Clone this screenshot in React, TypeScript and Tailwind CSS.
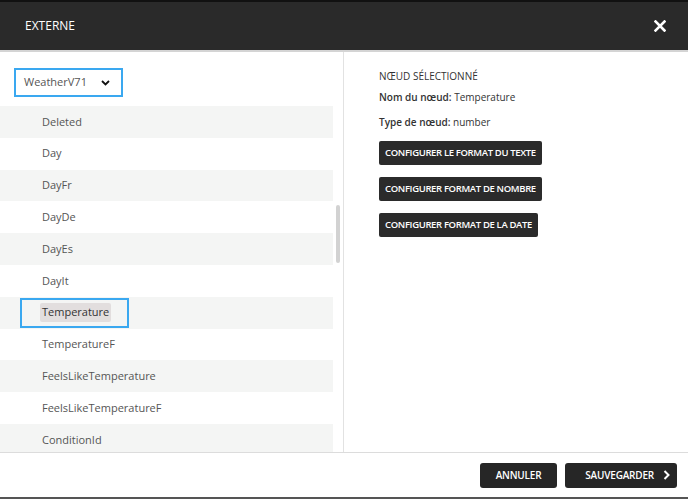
const rows = [
	"Deleted",
	"Day",
	"DayFr",
	"DayDe",
	"DayEs",
	"DayIt",
	"Temperature",
	"TemperatureF",
	"FeelsLikeTemperature",
	"FeelsLikeTemperatureF",
	"ConditionId",
];

const buttons = [
	"CONFIGURER LE FORMAT DU TEXTE",
	"CONFIGURER FORMAT DE NOMBRE",
	"CONFIGURER FORMAT DE LA DATE",
];

const App = () => {
	return (
		<div className="flex flex-col h-[499px] w-[688px] overflow-hidden bg-white font-['Open_Sans',sans-serif]">
			<div className="h-[2px] bg-[#111]" />
			<div className="flex items-center justify-between h-[48px] bg-[#2a2a2a] pl-[25px] pr-[22px]">
				<span className="text-[12px] text-white">EXTERNE</span>
				<svg width="12" height="12" viewBox="0 0 12 12">
					<path d="M1.5 1.5 L10.5 10.5 M10.5 1.5 L1.5 10.5" stroke="#fff" strokeWidth="2.6" strokeLinecap="square" />
				</svg>
			</div>
			<div className="h-[2px] bg-[#d4d4d4]" />

			<div className="flex flex-1 min-h-0">
				<div className="flex flex-col w-[344px] border-r border-[#e2e2e2]">
					<div className="pt-[16px] pl-[14px] pb-[9px]">
						<div className="flex items-center justify-between w-[109px] h-[29px] border-2 border-[#3aa8f0] pl-[8px] pr-[11px]">
							<span className="text-[11px] text-[#555]">WeatherV71</span>
							<svg width="9" height="6" viewBox="0 0 9 6">
								<path d="M1 1 L4.5 4.5 L8 1" fill="none" stroke="#111" strokeWidth="1.8" />
							</svg>
						</div>
					</div>
					<div className="relative flex-1 min-h-0 overflow-hidden">
						<ul className="w-[333px]">
							{rows.map((label, index) => (
								<li
									key={label}
									className={`flex items-center h-[31.8px] ${index % 2 === 0 ? "bg-[#f4f5f4]" : "bg-white"}`}>
									{label === "Temperature" ? (
										<div className="flex items-center h-[30px] w-[109px] ml-[20px] border-2 border-[#3aa8f0] pl-[18px]">
											<span className="text-[11px] text-[#333] bg-[#e2dede] rounded-[2px] px-[2px] py-[1px]">
												{label}
											</span>
										</div>
									) : (
										<span className="pl-[42px] text-[11px] text-[#555]">{label}</span>
									)}
								</li>
							))}
						</ul>
						<div className="absolute left-[336px] top-[99px] w-[4px] h-[58px] rounded-full bg-[#d2d2d2]" />
					</div>
				</div>

				<div className="flex flex-col flex-1 pl-[35px] pt-[16px] text-[10px] text-[#333]">
					<span className="leading-[16px]">NŒUD SÉLECTIONNÉ</span>
					<span className="mt-[5px] leading-[16px]">
						<b className="font-semibold">Nom du nœud:</b> Temperature
					</span>
					<span className="mt-[9px] leading-[16px]">
						<b className="font-semibold">Type de nœud:</b> number
					</span>
					<div className="flex flex-col items-start gap-[12px] mt-[11px]">
						{buttons.map((label) => (
							<button
								key={label}
								type="button"
								className="h-[24px] px-[6px] rounded-[2px] bg-[#2b2b2b] text-[9.5px] font-semibold text-white tracking-[-0.35px]">
								{label}
							</button>
						))}
					</div>
				</div>
			</div>

			<div className="flex items-center justify-end gap-[8px] h-[45px] border-t border-[#dcdcdc] pr-[11px]">
				<button type="button" className="h-[25px] w-[77px] rounded-[3px] bg-[#262626] text-[10px] font-semibold text-white tracking-[-0.2px]">
					ANNULER
				</button>
				<button
					type="button"
					className="flex items-center justify-end gap-[9px] h-[25px] w-[112px] rounded-[3px] bg-[#262626] pr-[7px] text-[10px] font-semibold text-white tracking-[-0.2px]">
					<span>SAUVEGARDER</span>
					<svg width="7" height="10" viewBox="0 0 7 10">
						<path d="M1.5 1 L5.5 5 L1.5 9" fill="none" stroke="#fff" strokeWidth="2" />
					</svg>
				</button>
			</div>
			<div className="h-[2px] bg-[#555]" />
		</div>
	);
};

export default App;
